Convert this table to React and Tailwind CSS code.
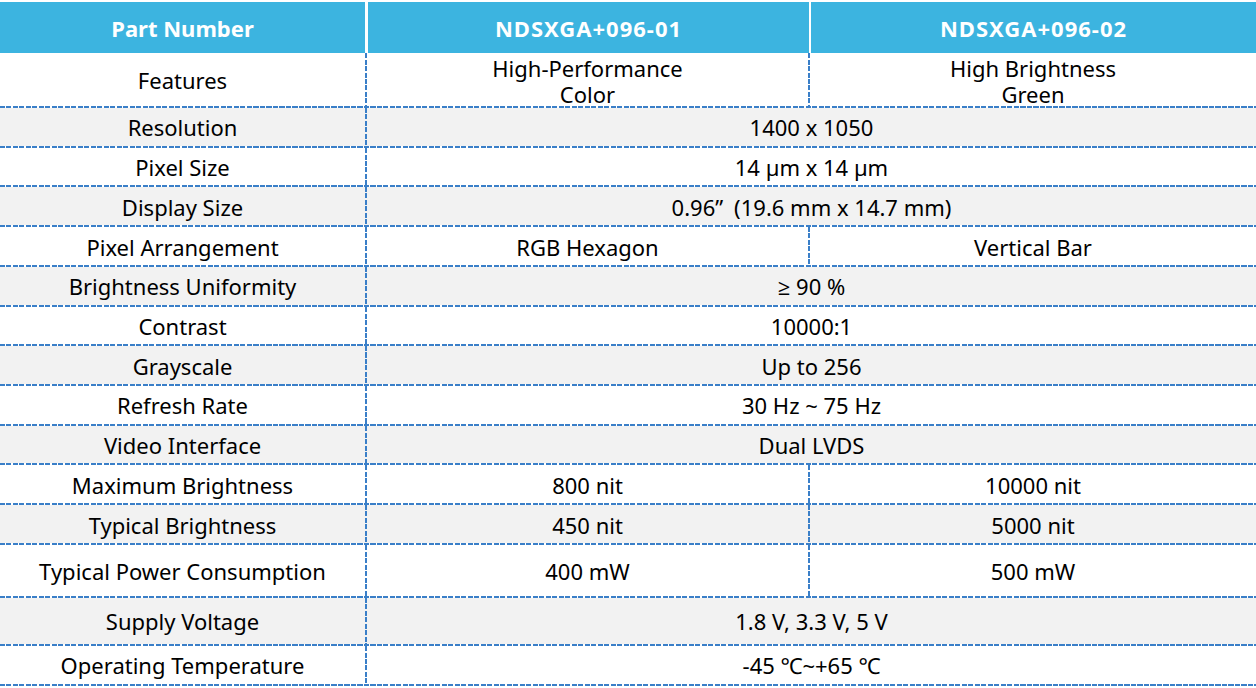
import React from 'react';

const rows = [
  { label: 'Features', a: ['High-Performance', 'Color'], b: ['High Brightness', 'Green'], h: 'h-[53px]' },
  { label: 'Resolution', v: '1400 x 1050' },
  { label: 'Pixel Size', v: '14 µm x 14 µm' },
  { label: 'Display Size', v: '0.96\u201D\u2002(19.6 mm x 14.7 mm)' },
  { label: 'Pixel Arrangement', a: 'RGB Hexagon', b: 'Vertical Bar' },
  { label: 'Brightness Uniformity', v: '\u2265 90 %' },
  { label: 'Contrast', v: '10000:1' },
  { label: 'Grayscale', v: 'Up to 256' },
  { label: 'Refresh Rate', v: '30 Hz ~ 75 Hz' },
  { label: 'Video Interface', v: 'Dual LVDS' },
  { label: 'Maximum Brightness', a: '800 nit', b: '10000 nit' },
  { label: 'Typical Brightness', a: '450 nit', b: '5000 nit' },
  { label: 'Typical Power Consumption', a: '400 mW', b: '500 mW', h: 'h-[51px]' },
  { label: 'Supply Voltage', v: '1.8 V, 3.3 V, 5 V', h: 'h-[46px]' },
  { label: 'Operating Temperature', v: '-45 \u2103~+65 \u2103', h: 'h-[38px]' },
];

// dashed rules, drawn as repeating gradients so the dash length matches
const HLine = () => (
  <div className="h-[2px] w-full bg-[repeating-linear-gradient(90deg,#3a7fc8_0_5px,transparent_5px_6.5px)]" />
);
const VLine = () => (
  <div className="w-[2px] shrink-0 self-stretch bg-[repeating-linear-gradient(180deg,#3a7fc8_0_5px,transparent_5px_6.5px)]" />
);

const Text = ({ value }) =>
  Array.isArray(value) ? (
    <p className="text-center leading-[26px] mt-[1px]">
      {value[0]}
      <br />
      {value[1]}
    </p>
  ) : (
    <span>{value}</span>
  );

export default function App() {
  return (
    <div className="w-[1256px] h-[688px] bg-white pt-[2px] text-[22px] text-black font-['Noto_Sans','Open_Sans',sans-serif] leading-none overflow-hidden">
      {/* header */}
      <div className="flex h-[51px] text-white font-bold text-[22px]">
        <div className="w-[365px] bg-[#3cb4e0] flex items-center justify-center">Part Number</div>
        <div className="w-[3px]" />
        <div className="w-[441px] bg-[#3cb4e0] flex items-center justify-center tracking-[1px]">NDSXGA+096-01</div>
        <div className="w-[2px]" />
        <div className="flex-1 bg-[#3cb4e0] flex items-center justify-center tracking-[1px]">NDSXGA+096-02</div>
      </div>

      {rows.map((r, i) => (
        <div key={r.label}>
          <div className={`flex ${r.h || 'h-[37.73px]'} ${i % 2 === 1 ? 'bg-[#f2f2f2]' : 'bg-white'}`}>
            <div className="w-[365px] shrink-0 flex items-center justify-center pt-[1px]">{r.label}</div>
            <VLine />
            {r.v !== undefined ? (
              <div className="flex-1 flex items-center justify-center pt-[1px]">
                <Text value={r.v} />
              </div>
            ) : (
              <>
                <div className="w-[441px] shrink-0 flex items-center justify-center pt-[1px]">
                  <Text value={r.a} />
                </div>
                <VLine />
                <div className="flex-1 flex items-center justify-center pt-[1px]">
                  <Text value={r.b} />
                </div>
              </>
            )}
          </div>
          <HLine />
        </div>
      ))}
    </div>
  );
}
